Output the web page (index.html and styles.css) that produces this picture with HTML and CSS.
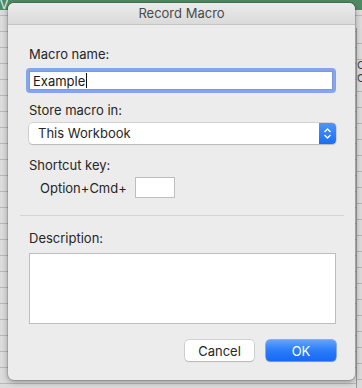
FILE: index.html
```html
<!DOCTYPE html>
<html lang="en">
  <head>
    <meta charset="UTF-8" />
    <meta name="viewport" content="width=device-width, initial-scale=1.0" />
    <title>Record Macro</title>
    <link rel="stylesheet" href="styles.css">
  </head>
  <body>
    <div class="desktop">
      <div class="ribbon">Vi</div>
      <div class="side-right">
        <span>Co</span>
        <span>Co</span>
      </div>

      <div class="dialog">
        <div class="titlebar">Record Macro</div>

        <div class="content top">
          <div class="field">
            <label>Macro name:</label>
            <div class="focus-ring">
              <div class="text-input">Example<span class="caret"></span></div>
            </div>
          </div>

          <div class="field">
            <label>Store macro in:</label>
            <div class="select">
              <span class="select-text">This Workbook</span>
              <span class="stepper">
                <svg width="9" height="13" viewBox="0 0 9 13">
                  <path d="M1.5 5 L4.5 2 L7.5 5" fill="none" stroke="#fff" stroke-width="1.4" />
                  <path d="M1.5 8 L4.5 11 L7.5 8" fill="none" stroke="#fff" stroke-width="1.4" />
                </svg>
              </span>
            </div>
          </div>

          <div class="field">
            <label>Shortcut key:</label>
            <div class="shortcut">
              <span>Option+Cmd+</span>
              <span class="key-box"></span>
            </div>
          </div>
        </div>

        <div class="separator"></div>

        <div class="content bottom">
          <div class="field">
            <label>Description:</label>
            <div class="textarea"></div>
          </div>

          <div class="actions">
            <button class="btn">Cancel</button>
            <button class="btn primary">OK</button>
          </div>
        </div>
      </div>
    </div>
  </body>
</html>
```

FILE: styles.css
```css
body {
  margin: 0;
  padding: 0;
  font-family: Inter, "Liberation Sans", sans-serif;
  font-size: 13px;
  color: #262626;
  overflow: hidden;
}
.desktop {
  position: relative;
  width: 362px;
  height: 388px;
  padding: 3px 0 0 8px;
  box-sizing: border-box;
  overflow: hidden;
  background-color: #dcdcdc;
  background-image:
    linear-gradient(#4f8a64, #4f8a64),
    repeating-linear-gradient(#dcdcdc 0 15px, #b9b9b9 15px 16px);
  background-size: 100% 10px, 100% 100%;
  background-repeat: no-repeat, repeat;
}
.ribbon {
  position: absolute;
  left: 0;
  top: -3px;
  width: 8px;
  overflow: hidden;
  color: #e6f0ea;
  font-size: 12px;
}
.side-right {
  position: absolute;
  right: 0;
  top: 28px;
  width: 6px;
  height: 360px;
  box-sizing: border-box;
  border-left: 1px solid #9a9a9a;
  overflow: hidden;
  display: flex;
  flex-direction: column;
  padding-top: 31px;
  font-size: 11px;
  line-height: 13px;
  color: #444;
  background: repeating-linear-gradient(#dadada 0 15px, #b5b5b5 15px 16px);
}
.dialog {
  width: 347px;
  height: 377px;
  background-color: #ececec;
  border-radius: 6px;
  box-shadow: 0 2px 6px rgba(0, 0, 0, 0.35), 0 0 0 1px rgba(0, 0, 0, 0.12);
  overflow: hidden;
  position: relative;
  z-index: 1;
}
.titlebar {
  height: 21px;
  line-height: 21px;
  text-align: center;
  color: #4a4a4a;
  background: linear-gradient(#ebebeb, #dadada);
  border-bottom: 1px solid #c4c4c4;
}
.content {
  padding: 0 19px 0 18px;
}
.content.top {
  padding-top: 21px;
}
.field label {
  display: block;
  height: 16px;
  line-height: 16px;
  margin-left: 3px;
}
.focus-ring {
  margin-top: 6px;
  padding: 3px;
  border-radius: 4px;
  background-color: #83a4ee;
}
.text-input {
  display: flex;
  align-items: center;
  height: 19px;
  box-sizing: border-box;
  border: 1px solid #7f97d6;
  padding: 0 3px;
  color: #1a1a1a;
  background: #fff;
}
.caret {
  width: 1px;
  height: 15px;
  margin-left: 1px;
  background-color: #111;
}
.top .field:nth-child(2) {
  margin-top: 9px;
}
.select {
  display: flex;
  align-items: stretch;
  height: 21px;
  margin: 5px 0 0 3px;
  background: #fff;
  border-radius: 4px;
  box-shadow: 0 0 0 0.5px #b8b8b8, 0 1px 1px rgba(0, 0, 0, 0.2);
  overflow: hidden;
}
.select-text {
  flex: 1;
  line-height: 21px;
  padding-left: 9px;
}
.stepper {
  width: 17px;
  display: flex;
  align-items: center;
  justify-content: center;
  background: linear-gradient(#4d95fb, #1a6ef6);
}
.top .field:nth-child(3) {
  margin-top: 13px;
}
.shortcut {
  display: flex;
  align-items: center;
  gap: 8px;
  margin: 4px 0 0 14px;
}
.key-box {
  width: 38px;
  height: 19px;
  background: #fff;
  border: 1px solid #bdbdbd;
}
.separator {
  height: 1px;
  background-color: #d4d4d4;
  margin: 17px 11px 0 12px;
}
.bottom .field label {
  margin-top: 14px;
}
.textarea {
  height: 69px;
  margin: 7px 0 0 3px;
  background: #fff;
  border: 1px solid #bdbdbd;
}
.actions {
  display: flex;
  justify-content: flex-end;
  gap: 12px;
  margin-top: 16px;
}
.btn {
  width: 69px;
  height: 21px;
  padding: 0;
  font-family: inherit;
  font-size: 13px;
  color: #262626;
  background: #fff;
  border: none;
  border-radius: 4px;
  box-shadow: 0 0 0 0.5px #b5b5b5, 0 1px 1px rgba(0, 0, 0, 0.2);
}
.btn.primary {
  width: 70px;
  color: #fff;
  background: linear-gradient(#63a3fc, #2a7cf8 50%, #1769f5);
  box-shadow: 0 0 0 0.5px #2f6fd8, 0 1px 1px rgba(0, 0, 0, 0.2);
}
```
